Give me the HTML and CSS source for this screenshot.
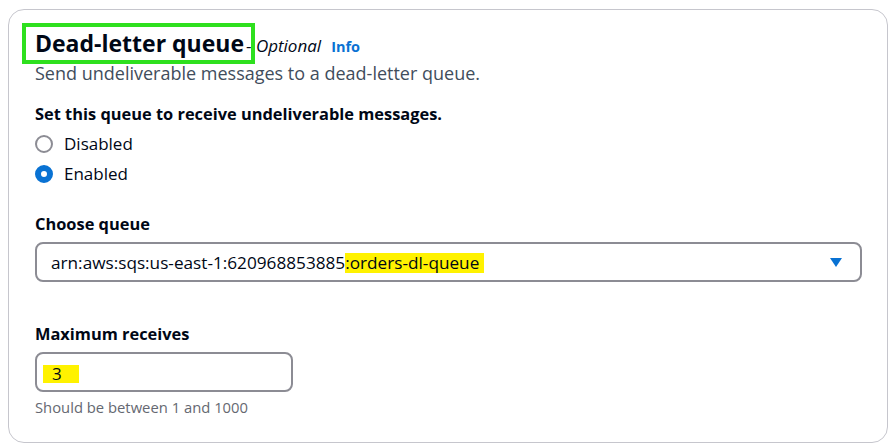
FILE: index.html
```html
<!DOCTYPE html>
<html>
<head>
<meta charset="utf-8">
<link rel="stylesheet" href="styles.css">
</head>
<body>
<div class="card">
  <div class="header">
    <h2 class="title"><span class="title-text">Dead-letter queue</span><span class="optional"> - <i>Optional</i></span><a class="info">Info</a></h2>
    <p class="desc">Send undeliverable messages to a dead-letter queue.</p>
  </div>
  <div class="field field-radio">
    <div class="label">Set this queue to receive undeliverable messages.</div>
    <div class="radios">
      <label class="radio"><span class="dot"></span>Disabled</label>
      <label class="radio"><span class="dot checked"></span>Enabled</label>
    </div>
  </div>
  <div class="field field-queue">
    <div class="label">Choose queue</div>
    <div class="select">
      <span class="value">arn:aws:sqs:us-east-1:620968853885<span class="hl">:orders-dl-queue</span></span>
      <svg class="caret" width="12" height="9" viewBox="0 0 12 9"><path d="M0 0h12L6 9z" fill="#0972d3"/></svg>
    </div>
  </div>
  <div class="field field-max">
    <div class="label">Maximum receives</div>
    <div class="input"><span class="hl hl-num">3</span></div>
    <div class="hint">Should be between 1 and 1000</div>
  </div>
</div>
</body>
</html>
```
FILE: styles.css
```css
* { box-sizing: border-box; }
html, body { margin: 0; padding: 0; background: #fff; }
body {
  font-family: "Open Sans", "Noto Sans", sans-serif;
  color: #000716;
  font-size: 17px;
}
.card {
  margin: 9px 0 0 8px;
  width: 880px;
  height: 434px;
  border: 1px solid #c6c6cd;
  border-radius: 16px;
  padding: 18px 26px 0 26px;
}
.title {
  margin: 0;
  font-size: 23px;
  line-height: 30px;
  font-weight: 700;
  display: flex;
  align-items: baseline;
}
.title-text { position: relative; }
.title-text::after {
  content: "";
  position: absolute;
  left: -13px;
  right: -11px;
  top: -5px;
  bottom: -6px;
  border: 4px solid #2ee01e;
}
.optional {
  font-size: 17px;
  font-weight: 400;
  color: #000716;
  margin-left: 2px;
}
.optional i { font-style: italic; }
.info {
  font-size: 14.5px;
  font-weight: 700;
  color: #0972d3;
  margin-left: 10px;
}
.desc {
  margin: 0;
  font-size: 18px;
  line-height: 24px;
  color: #414d5c;
  margin-top: -1px;
}
.label {
  font-weight: 700;
  font-size: 16.4px;
  line-height: 22px;
}
.field-radio { margin-top: 18px; }
.field-queue { margin-top: 24px; }
.field-max { margin-top: 41px; }
.radios { display: flex; flex-direction: column; margin-top: 4px; }
.radio {
  display: flex;
  align-items: center;
  gap: 11px;
  height: 30px;
  line-height: 22px;
}
.dot {
  width: 18px;
  height: 18px;
  border-radius: 50%;
  border: 2px solid #8c8c94;
}
.dot.checked { border: 6px solid #0972d3; }
.select, .input {
  margin-top: 7px;
  height: 40px;
  border: 2px solid #8c8c94;
  border-radius: 8px;
  display: flex;
  align-items: center;
  padding: 0 18px 0 14px;
}
.select { justify-content: space-between; width: 827px; font-size: 17.2px; }
.input { width: 258px; padding-left: 6px; }
.hl {
  display: inline-block;
  background: #fff200;
  line-height: 20px;
  padding-right: 5px;
}
.hl-num { padding: 0 17px 0 9px; line-height: 18px; margin-top: 3px; }
.hint {
  margin-top: 5px;
  font-size: 14.8px;
  line-height: 20px;
  color: #656871;
}
```
